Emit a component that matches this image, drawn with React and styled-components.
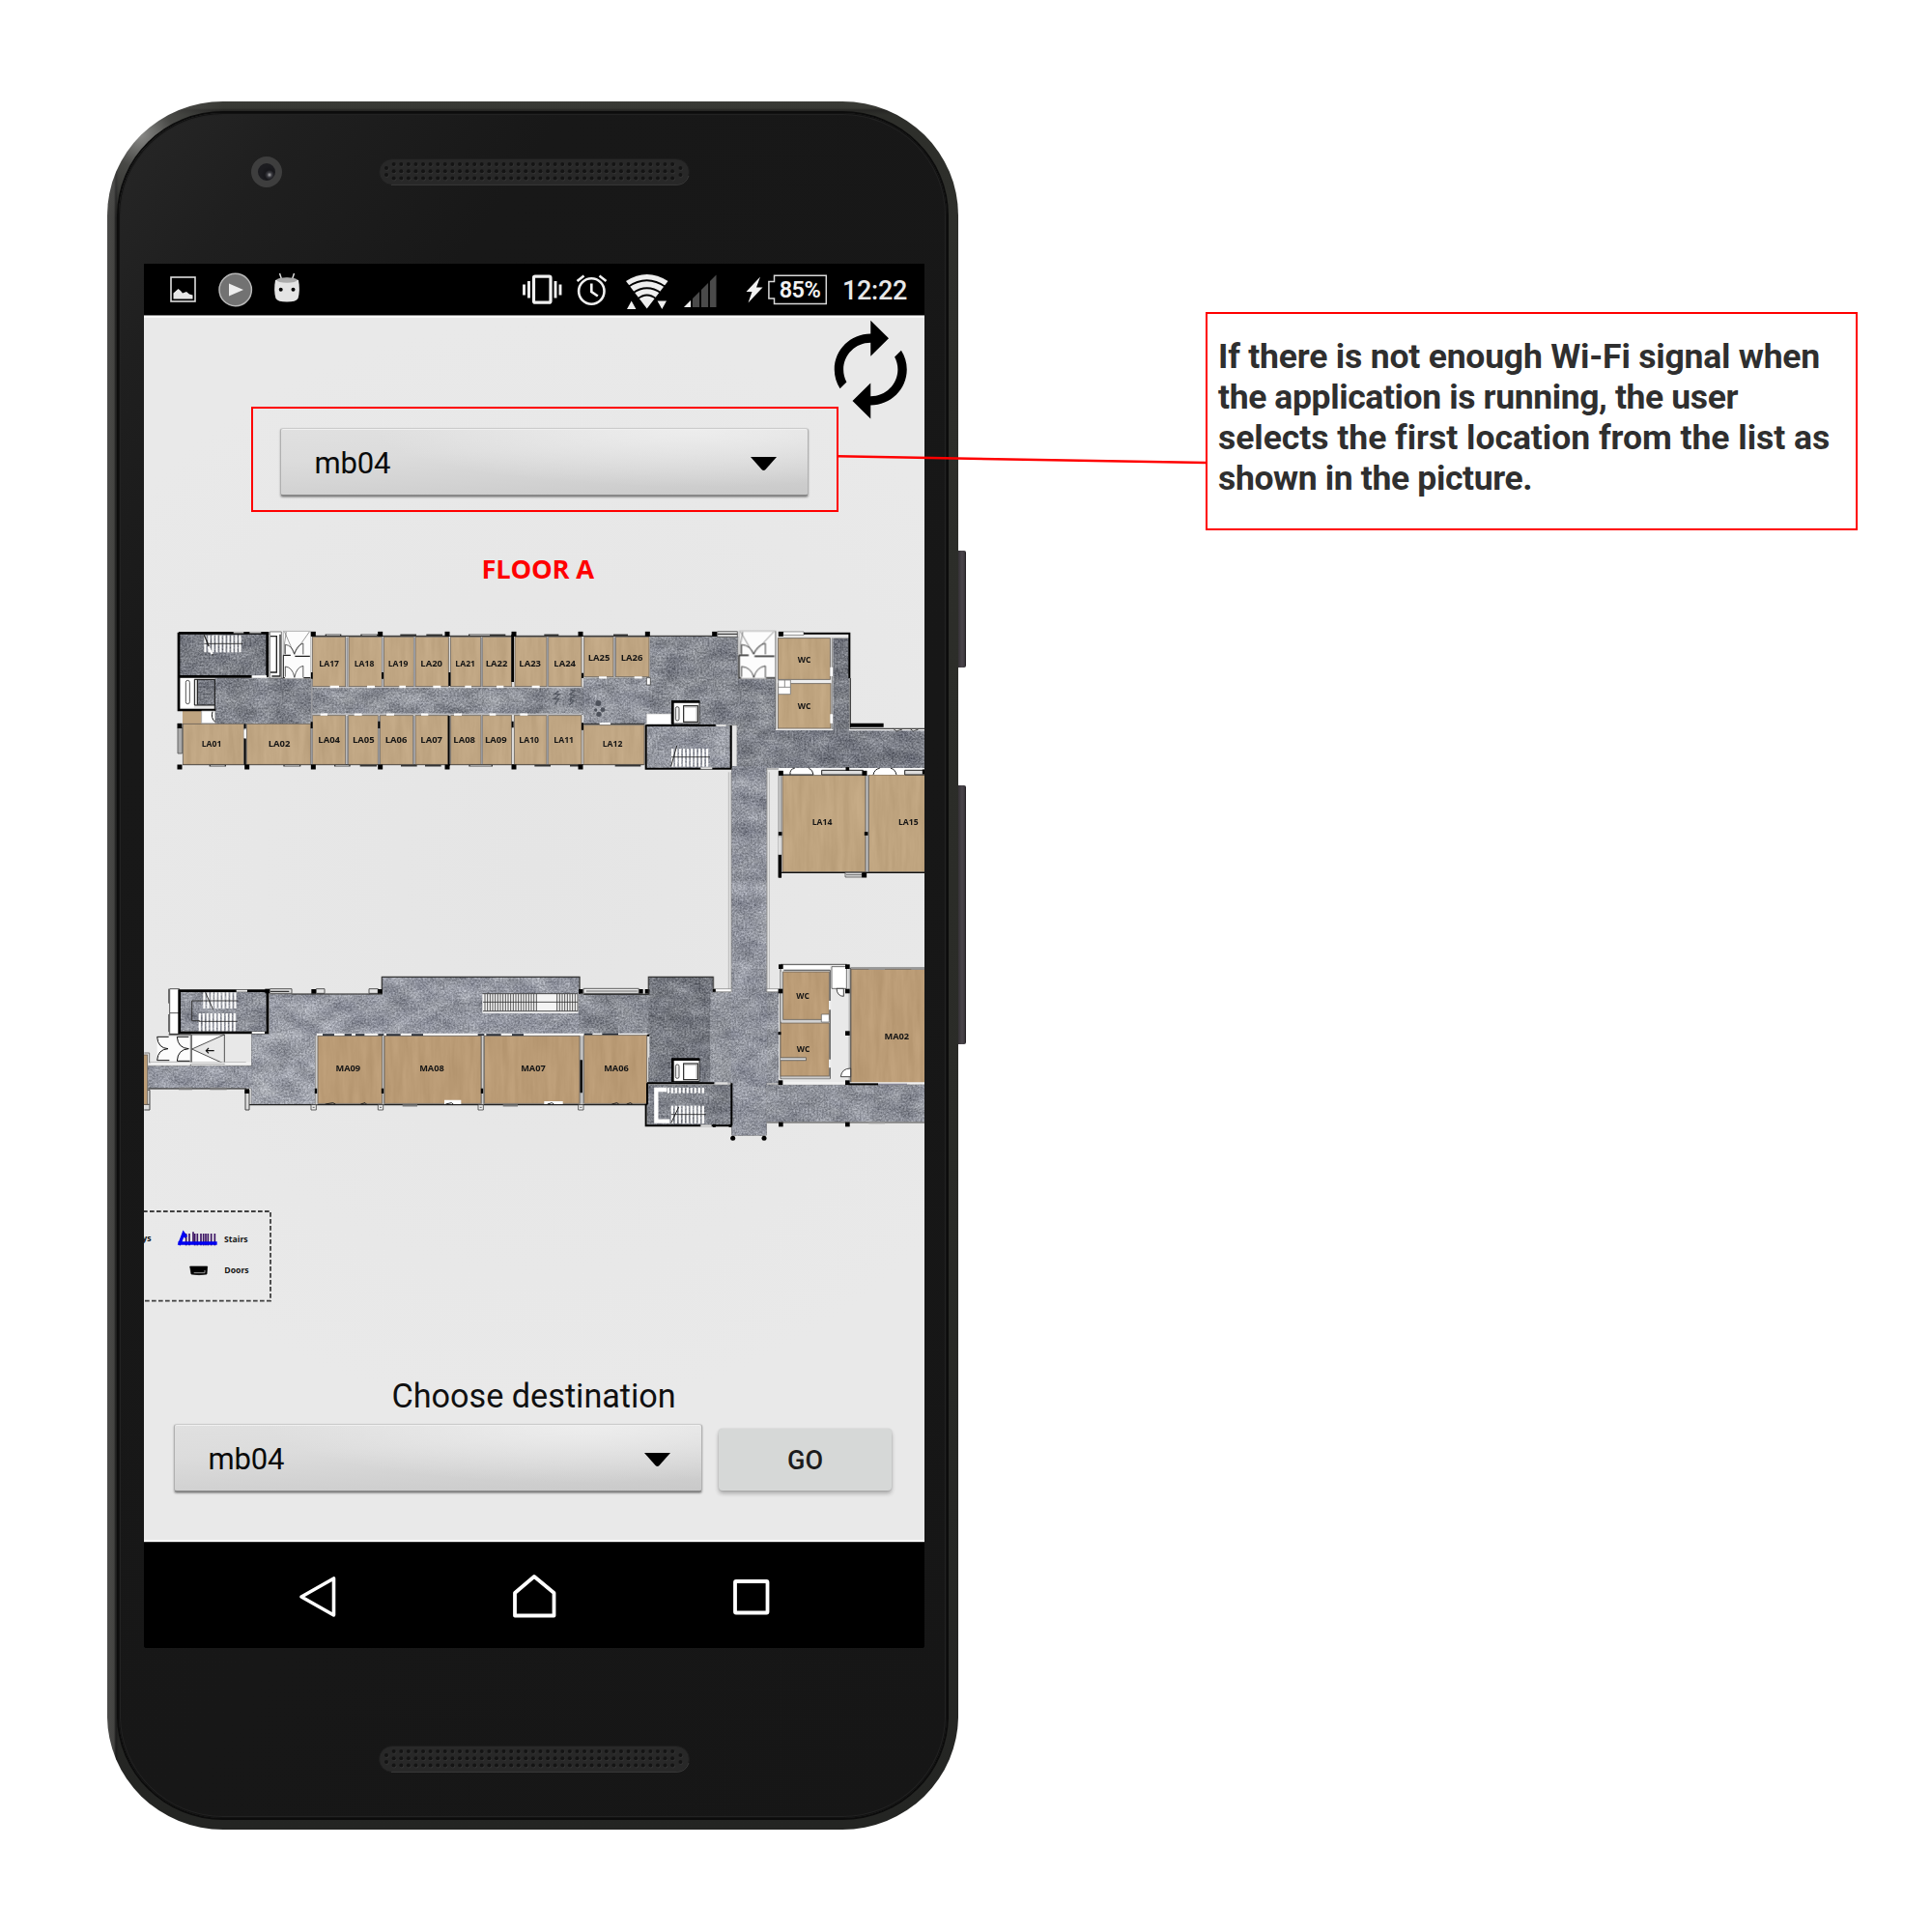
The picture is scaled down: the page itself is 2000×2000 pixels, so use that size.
import React from "react";
import styled, { createGlobalStyle } from "styled-components";

const GlobalStyle = createGlobalStyle`
  * { box-sizing: border-box; }
  html, body { margin: 0; padding: 0; background: #fff; }
`;

const Stage = styled.main`
  position: relative;
  display: flex;
  align-items: flex-start;
  width: 2000px;
  height: 2000px;
  overflow: hidden;
  background: #fff;
  font-family: Roboto, "Liberation Sans", sans-serif;
`;

const Phone = styled.section`
  position: relative;
  flex: none;
  width: 881px;
  height: 1789px;
  margin: 105px 0 0 111px;
  padding: 12px;
  border-radius: 120px / 118px;
  background:
    radial-gradient(circle at 34px 34px, #8a8a88 0, rgba(90, 90, 88, 0.6) 34px, transparent 90px),
    linear-gradient(90deg, #4b4b49 0, #444442 7px, #1c1c1c 9px, transparent 12px),
    linear-gradient(180deg, #3b3c37 0, #373833 7px, #262624 9px, #2e2f2b 14px, #2a2b27 60%, #242523 100%);
`;

const Face = styled.div`
  display: flex;
  flex-direction: column;
  width: 857px;
  height: 1765px;
  border-radius: 108px / 106px;
  background: linear-gradient(125deg, #272727 0, #1f1f1f 9%, #181818 22%, #161616 100%);
  box-shadow: 0 0 0 2px #0c0c0c, inset 0 0 0 1px #121212, inset 0 0 0 2px #222;
`;

const SideKey = styled.i`
  position: absolute;
  left: 881px;
  top: ${(p) => p.$top}px;
  width: 8px;
  height: ${(p) => p.$height}px;
  border-radius: 0 2px 2px 0;
  background: linear-gradient(90deg, #353136, #4a454b 50%, #3d393e 80%, #1c1a1c);
`;

const TopBezel = styled.div`
  display: flex;
  align-items: center;
  gap: 100px;
  height: 122px;
  margin-bottom: 34px;
  padding-left: 137px;
`;

const BottomBezel = styled.div`
  padding: 101px 0 0 269px;
`;

const Camera = styled.div`
  width: 32px;
  height: 32px;
  border: 7px solid #3e3e3e;
  border-radius: 50%;
  background: radial-gradient(circle at 12px 12px, #a9a9ab 0, #3a3a40 2.5px, #17171b 5px, #1c1c20 9px);
`;

const Screen = styled.div`
  display: flex;
  flex-direction: column;
  width: 808px;
  height: 1433px;
  margin-left: 26px;
  border-radius: 0 0 3px 3px;
  overflow: hidden;
  background: #000;
`;

const StatusBar = styled.header`
  display: flex;
  height: 53px;
  background: #000;
  color: #e8e8e8;
`;

const Glyph = styled.svg`
  display: block;
  flex: none;
  margin-left: ${(p) => p.$ml || 0}px;
`;

const Battery = styled.span`
  display: flex;
  align-items: center;
  justify-content: center;
  position: relative;
  width: 61px;
  height: 53px;
  margin-left: 5px;
  padding: 0 0 0 5px;
  color: #f2f2f2;
  font-size: 23.5px;
  font-weight: 600;
  letter-spacing: -0.6px;

  svg {
    position: absolute;
    left: 0;
    top: 0;
  }
`;

const Clock = styled.time`
  margin-left: 16px;
  font-size: 27px;
  font-weight: 500;
  line-height: 56px;
  letter-spacing: -0.3px;
  white-space: nowrap;
`;

const AppView = styled.div`
  display: flex;
  flex-direction: column;
  height: 1270px;
  border-top: 1px solid #888;
  border-bottom: 2px solid #fff;
  background: radial-gradient(circle at 50% 45%, #e5e5e5, #e9e9e9 70%);
  box-shadow: inset 0 2px 0 #f8f8f8;
`;

const ActionRow = styled.div`
  display: flex;
  justify-content: flex-end;
  height: 116px;
  line-height: 0;
`;

const Spinner = styled.button`
  display: flex;
  align-items: center;
  justify-content: space-between;
  flex: none;
  width: 547px;
  height: 71px;
  margin: 0 0 0 ${(p) => p.$ml}px;
  padding: 4px 32px 0 34.5px;
  border: 1px solid #b0b0b0;
  border-top-color: #cbcbcb;
  border-bottom: 2px solid #888;
  border-radius: 3px;
  background:
    radial-gradient(ellipse 330px 60px at 78% 0, rgba(240, 240, 240, 0.85), rgba(236, 236, 236, 0) 100%),
    linear-gradient(177deg, #e0e0e0 0, #dcdcdc 35%, #c9c9c9 100%);
  box-shadow: 0 1px 2px #999, inset 0 1px 0 #f0f0f0;
  color: #0a0a0a;
  font: 400 31px/64px Roboto, sans-serif;
  letter-spacing: -0.2px;
`;

const FloorTitle = styled.h1`
  margin: 55px 0 0;
  height: 45px;
  padding-left: 349.5px;
  color: #f00;
  font: 700 27.3px/40px "Open Sans", "Noto Sans", sans-serif;
  letter-spacing: -0.2px;
  white-space: nowrap;
`;

const MapView = styled.svg`
  display: block;
  flex: none;
  margin-top: 26px;
`;

const RoomName = styled.text`
  font: 700 27px "Open Sans", "Noto Sans", sans-serif;
  fill: #141414;
  text-anchor: middle;
`;

const Prompt = styled.p`
  margin: 64px 0 0;
  height: 50px;
  padding-left: 256.5px;
  color: #101010;
  font: 400 34.2px/42px Roboto, sans-serif;
  white-space: nowrap;
`;

const Controls = styled.div`
  display: flex;
  align-items: flex-start;
  gap: 17px;
`;

const GoButton = styled.button`
  width: 179px;
  height: 64px;
  margin: 5px 0 0;
  padding: 3px 0 0;
  border: 0;
  border-radius: 4px;
  background: #d6d8d7;
  box-shadow: 0 3px 4px rgba(0, 0, 0, 0.28), 0 0 2px rgba(0, 0, 0, 0.14);
  color: #1c1c1c;
  font: 500 27px/61px Roboto, sans-serif;
`;

const NavBar = styled.nav`
  display: flex;
  height: 110px;
  border-top: 1px solid #333;
  background: #000;
`;

const Highlight = styled.div`
  position: absolute;
  left: 260px;
  top: 421px;
  width: 608px;
  height: 109px;
  border: 2px solid #f00;
`;

const Connector = styled.svg`
  position: absolute;
  left: 866px;
  top: 460px;
`;

const Note = styled.aside`
  width: 675px;
  height: 226px;
  margin: 323px 0 0 256px;
  padding: 23px 0 0 11px;
  border: 2px solid #f00;
  background: #fff;
  color: #2f2f2f;
`;

const NoteLine = styled.div`
  height: 42px;
  font: 700 35.5px/42px Roboto, "Open Sans", sans-serif;
  letter-spacing: ${(p) => p.$track}px;
  white-space: nowrap;
`;

function Grille() {
  const dots = [];
  for (let row = 0; row < 3; row++)
    for (let i = 0; i < 39; i++) dots.push([15.7 + i * 7.59, 6 + row * 7.3]);
  dots.push([8, 10], [8, 17], [312.5, 10], [312.5, 17]);
  return (
    <Glyph width="322" height="28">
      <rect x="0.5" y="0.5" width="321" height="27" rx="13.5" fill="#282828" stroke="#1e1e1e" />
      <path d="M13 27.4H309Q318 27 321 18" fill="none" stroke="#3a3a3a" />
      {dots.map(([x, y], i) => (
        <g key={i}>
          <circle cx={x + 0.5} cy={y + 0.6} r="2.2" fill="#353535" />
          <circle cx={x} cy={y} r="2" fill="#141414" />
        </g>
      ))}
    </Glyph>
  );
}

function StatusIcon({ x, w, ml, children }) {
  return (
    <Glyph $ml={ml} width={w} height="53" viewBox={`${x} 273 ${w} 53`}>
      {children}
    </Glyph>
  );
}

function Caret() {
  return (
    <svg width="27" height="15" viewBox="0 0 27 15">
      <path d="M0 0H27L15.500 13Q13.500 15 11.500 13Z" fill="#000" />
    </svg>
  );
}

function Floor({ r, c = "#868a94" }) {
  const [a, b, d, e] = r;
  return <rect x={a} y={b} width={d - a} height={e - b} fill={c} />;
}

function Rooms({ list, color }) {
  return (
    <>
      <g filter="url(#wood)">
        {list.map(([n, a, b, d, e], i) => (
          <rect key={i} x={a} y={b} width={d - a} height={e - b} fill={color} />
        ))}
      </g>
      {list.map(([n, a, b, d, e, lx, ly], i) => (
        <g key={i}>
          <rect x={a} y={b} width={d - a} height={e - b} fill="none" stroke="#6b6257" strokeWidth="2.5" />
          {n && (
            <RoomName x={lx} y={ly + 10} textLength={n === "WC" ? 41 : n[0] === "M" ? 77 : n.includes("1") ? 62 : 68} lengthAdjust="spacingAndGlyphs">
              {n}
            </RoomName>
          )}
        </g>
      ))}
    </>
  );
}

function Pillars({ at, s = 15 }) {
  return at.map(([x, y], i) => <rect key={i} x={x - s / 2} y={y - s / 2} width={s} height={s} fill="#000" />);
}

function Steps({ x, y, n, pitch, h, rail }) {
  return (
    <g>
      {Array.from({ length: n }, (_, i) => (
        <rect key={i} x={x + i * pitch} y={y} width={pitch * 0.55} height={h} fill="#fff" />
      ))}
      {rail && <path d={`M${x} ${rail}h${n * pitch}`} stroke="#222" strokeWidth="2.5" />}
    </g>
  );
}

function Lift({ x, y }) {
  return (
    <g transform={`translate(${x} ${y})`}>
      <rect x="3" y="3" width="84" height="69" fill="#fff" stroke="#000" strokeWidth="2.5" />
      <path d="M4 74V4H88" fill="none" stroke="#000" strokeWidth="8" />
      <rect x="13" y="20" width="11" height="43" rx="5" fill="#eee" stroke="#333" strokeWidth="2.5" />
      <rect x="38" y="17" width="44" height="50" fill="#fff" stroke="#222" strokeWidth="3.5" />
      <path d="M42 21h36v42" fill="none" stroke="#777" strokeWidth="1.5" />
    </g>
  );
}

function Entrance({ x, stretch = 1 }) {
  return (
    <g transform={`translate(${x} 0) scale(${stretch} 1)`} fill="none" stroke="#222" strokeWidth="2.5">
      <rect x="1" y="40" width="112" height="147" fill="#fcfcfc" stroke="#aaa" />
      <path d="M5 42L44 110L108 42M12 42L5 78V110" stroke="#777" />
      <path d="M0 115h30M0 115v70h6M110 118H48M112 185H84" strokeWidth="4" />
      <path d="M8 82q28 2 38 30q8-28 36-34v34M8 112V82M8 182v-32q30 2 38 34q8-32 36-36v36" />
    </g>
  );
}

const northSmall = [
  ["LA17", 460, 58, 563, 212, 512, 140], ["LA18", 573, 58, 677, 212, 621, 140],
  ["LA19", 682, 58, 775, 212, 726, 140], ["LA20", 780, 58, 883, 212, 830, 140],
  ["LA21", 889, 58, 983, 212, 935, 140], ["LA22", 988, 58, 1079, 212, 1032, 140],
  ["LA23", 1089, 58, 1188, 212, 1136, 140], ["LA24", 1193, 58, 1296, 212, 1244, 140],
  ["LA25", 1304, 58, 1395, 182, 1350, 123], ["LA26", 1402, 58, 1506, 182, 1452, 123],
  ["LA04", 460, 302, 563, 454, 512, 377], ["LA05", 572, 302, 664, 454, 619, 377],
  ["LA06", 670, 302, 773, 454, 720, 377], ["LA07", 780, 302, 882, 454, 830, 377],
  ["LA08", 890, 302, 984, 454, 932, 377], ["LA09", 988, 302, 1079, 454, 1030, 377],
  ["LA10", 1087, 302, 1188, 454, 1133, 377], ["LA11", 1193, 302, 1296, 454, 1241, 377],
  ["LA01", 58, 328, 247, 454, 147, 388], ["LA02", 256, 328, 455, 454, 357, 388],
  ["LA12", 1302, 332, 1491, 454, 1392, 390],
];
const northEast = [
  ["WC", 736, 62, 898, 190, 818, 127], ["WC", 736, 203, 900, 342, 818, 272],
  ["LA14", 750, 488, 1008, 788, 873, 631], ["LA15", 1018, 486, 1200, 788, 1141, 631],
];
const southWest = [
  ["MA09", 567, 277, 767, 487, 661, 377], ["MA08", 774, 277, 1074, 487, 921, 377],
  ["MA07", 1084, 277, 1380, 487, 1236, 377], ["MA06", 1394, 275, 1589, 487, 1494, 377],
  ["", 20, 336, 38, 490],
];
const southEast = [
  ["WC", 752, 78, 895, 226, 813, 152], ["WC", 744, 237, 895, 402, 815, 317],
  ["MA02", 963, 70, 1200, 424, 1105, 277],
];

function FloorPlan() {
  return (
    <MapView width="808" height="720" viewBox="27 0 2424 2160">
      <defs>
        <filter id="granite" x="0" y="0" width="1" height="1" colorInterpolationFilters="sRGB">
          <feTurbulence type="fractalNoise" baseFrequency="0.014 0.022" numOctaves="5" seed="7" />
          <feColorMatrix values=".8 .2 0 0 0  .8 .2 0 0 0  .75 .25 0 0 0  0 0 0 0 1" result="n" />
          <feComposite in="SourceGraphic" in2="n" operator="arithmetic" k1="0" k2="1" k3="0.36" k4="-0.17" result="m" />
          <feTurbulence type="fractalNoise" baseFrequency="0.18" numOctaves="2" seed="11" />
          <feColorMatrix values="1 0 0 0 0  1 0 0 0 0  1 0 0 0 0  0 0 0 0 1" result="f" />
          <feComposite in="m" in2="f" operator="arithmetic" k1="0" k2="1" k3="0.42" k4="-0.2" result="g" />
          <feComposite in="g" in2="SourceGraphic" operator="in" />
        </filter>
        <filter id="wood" x="0" y="0" width="1" height="1" colorInterpolationFilters="sRGB">
          <feTurbulence type="fractalNoise" baseFrequency="0.05 0.006" numOctaves="3" seed="3" />
          <feColorMatrix values="1 0 0 0 0  1 0 0 0 0  1 0 0 0 0  0 0 0 0 1" result="n" />
          <feComposite in="SourceGraphic" in2="n" operator="arithmetic" k1="0" k2="1" k3="0.08" k4="-0.035" result="m" />
          <feComposite in="m" in2="SourceGraphic" operator="in" />
        </filter>
      </defs>

      {/* granite floors */}
      <g filter="url(#granite)">
        <g transform="translate(90 0)">
          <Floor r={[45, 48, 325, 182]} c="#74777f" />
          <Floor r={[103, 190, 158, 270]} c="#74777f" />
          <Floor r={[158, 185, 456, 328]} c="#7e8189" />
          <Floor r={[456, 215, 1302, 300]} c="#878a92" />
        </g>
        <g transform="translate(1260 0)">
          <Floor r={[131, 185, 342, 328]} c="#8c8f98" />
          <Floor r={[338, 58, 612, 332]} c="#80838b" />
          <Floor r={[608, 187, 729, 466]} c="#7e8189" />
          <Floor r={[903, 62, 958, 350]} c="#70737b" />
          <Floor r={[727, 345, 1200, 466]} c="#747780" />
          <Floor r={[328, 333, 592, 466]} c="#8f929b" />
        </g>
        <g transform="translate(0 1020)">
          <Floor r={[140, 140, 408, 264]} c="#868992" />
          <Floor r={[416, 147, 770, 272]} c="#91949e" />
          <Floor r={[766, 94, 1380, 274]} c="#8d909a" />
          <Floor r={[360, 270, 564, 490]} c="#9699a2" />
          <Floor r={[38, 370, 362, 440]} c="#91949e" />
          <Floor r={[1376, 147, 1598, 274]} c="#83868e" />
        </g>
        <g transform="translate(1260 1020)">
          <Floor r={[334, 94, 535, 424]} c="#72757d" />
          <Floor r={[525, 140, 738, 424]} c="#8c8f97" />
          <Floor r={[330, 428, 592, 555]} c="#7b7e86" />
          <Floor r={[700, 428, 1200, 544]} c="#898c95" />
          <Floor r={[592, -560, 701, 587]} c="#8b8e98" />
        </g>
      </g>

      {/* north wing */}
      <g transform="translate(90 0)">
        <path d="M460 58H1504M460 212H1296M458 300H1296M57 456H1490" stroke="#f0f0f0" strokeWidth="7" />
        <path d="M458 55H1780M57 455H1490" stroke="#1a1a1a" strokeWidth="3" />
        <path d="M460 213H1300M460 299H1300" stroke="#77777d" strokeWidth="1.5" />
        <Floor r={[57, 286, 116, 330]} c="#bfa480" />
        <Rooms list={northSmall} color="#bfa582" />
        <path d="M568 58V213M677 58V213M777 58V213M986 58V213M1190 58V213M568 302V454M667 302V454M776 302V454M986 302V454M1190 302V454M458 190V454M251 340V454M1399 58V182" stroke="#999a9e" strokeWidth="5" />
        <path d="M515 213h28M630 213h24M730 213h20M835 213h24M934 213h20M1032 213h22M1142 213h24M485 299h22M590 299h24M690 299h24M798 299h22M900 299h24M1010 299h20M1105 299h24M1350 184h24M1460 184h24" stroke="#fff" strokeWidth="7" />
        <path d="M1082 50V198" stroke="#000" strokeWidth="8" />
        <path d="M886 168V210M884 302V458M1082 320v20M667 320v22M678 168v20M458 168v20M458 322v20M1299 325v22M1299 170v16" stroke="#000" strokeWidth="6" />
        <path d="M500 52h50M610 52h54M733 52h50M814 52h50M945 52h74M1010 52h50M1180 52h45M1395 52h45M140 458h52M370 458h54M528 458h50M608 458h52M735 458h50M810 458h50M946 458h74M1150 458h50M1260 458h36M1400 458h80" stroke="#333" strokeWidth="5" />
        <path d="M504 52h42M614 52h46M949 52h62M144 458h44M374 458h46M532 458h42M950 458h66" stroke="#fff" strokeWidth="2" />
        <path d="M45 46H325M45 44V285H160M45 181H272M320 44V182" fill="none" stroke="#000" strokeWidth="8" />
        <path d="M215 44h32M265 44h36" stroke="#bbb" strokeWidth="5" />
        <path d="M272 181h46" stroke="#fff" strokeWidth="7" />
        <Steps x={124} y={53} n={10} pitch={12} h={53} rail={79} />
        <path d="M124 52L150 115" stroke="#222" strokeWidth="4" />
        <path d="M137 88l12 24" stroke="#fff" strokeWidth="7" />
        <rect x="51" y="186" width="42" height="92" fill="#fff" />
        <rect x="67" y="193" width="12" height="73" rx="6" fill="#fff" stroke="#333" strokeWidth="2.5" />
        <path d="M157 190H94V270H157M103 190V268M157 190V285" fill="none" stroke="#111" strokeWidth="3" />
        <path d="M116 288h42v38h-42z" fill="#fff" stroke="#999" strokeWidth="2" />
        <path d="M150 290q-6 20 8 32" fill="none" stroke="#111" strokeWidth="3" />
        <path d="M328 42h36v144h-36z" fill="#fff" stroke="#666" strokeWidth="2.5" />
        <path d="M330 56h19v112h-19M334 180h26V50" fill="none" stroke="#222" strokeWidth="4" />
        <Entrance x={370} stretch={0.75} />
        <path d="M42 340h14v80H42z" fill="#aaa" stroke="#555" strokeWidth="2.5" />
        <path d="M251 328v14M251 374V455" stroke="#000" strokeWidth="6" />
        <path d="M251 346V372" stroke="#fff" strokeWidth="7" />
        <Pillars at={[[463, 49], [671, 49], [879, 49], [1086, 49], [1293, 49], [1501, 49], [1709, 49], [48, 334], [48, 462], [257, 462], [463, 462], [671, 462], [879, 462], [1086, 462], [1293, 462]]} />
        <path d="M1225 226l-14 10h16l-16 14h14l-12 18M1262 222l12 4-14 10 14 4-14 12 12 4-14 14" fill="none" stroke="#555962" strokeWidth="4" />
        <circle cx="1348" cy="264" r="9" fill="#4d515a" /><circle cx="1362" cy="284" r="7" fill="#4d515a" />
        <circle cx="1350" cy="298" r="8" fill="#4d515a" /><circle cx="1340" cy="285" r="5" fill="#4d515a" />
      </g>
      <g transform="translate(1260 0)">
        <path d="M548 41h62v17h-62z" fill="#ddd" stroke="#555" strokeWidth="2.5" />
        <path d="M548 49H610M131 328H322" stroke="#222" strokeWidth="3" />
        <path d="M182 327h34" stroke="#fff" strokeWidth="6" />
        <path d="M328 185h12v22h-12z" fill="#fff" stroke="#222" strokeWidth="2" />
        <path d="M328 297h75v32h-75z" fill="#fff" stroke="#bbb" strokeWidth="2" />
        <Lift x={405} y={255} />
        <path d="M328 333H542M326 331V467H592M590 333V466" fill="none" stroke="#000" strokeWidth="6" />
        <path d="M545 333h30M496 466h36" stroke="#ddd" strokeWidth="6" />
        <Steps x={405} y={405} n={10} pitch={12} h={56} rail={431} />
        <path d="M422 396L404 460" stroke="#222" strokeWidth="3" />
        <Entrance x={615} />
        <path d="M732 40V345H904V62" fill="none" stroke="#ececec" strokeWidth="6" />
        <path d="M729 40V345M736 196H900M904 62V345" fill="none" stroke="#555" strokeWidth="2" />
        <path d="M734 196H902" stroke="#eee" strokeWidth="9" />
        <path d="M752 42h64v10h-64z" fill="#fff" stroke="#666" strokeWidth="2" />
        <Rooms list={northEast} color="#bea37e" />
        <path d="M737 192h38v44h-38zM737 214h38M757 192v22" fill="#fff" stroke="#777" strokeWidth="2.5" />
        <path d="M902 152v28M902 298v28" stroke="#fff" strokeWidth="8" />
        <path d="M816 47H958V186" fill="none" stroke="#000" strokeWidth="6" />
        <path d="M961 186V340M960 343H1200" fill="none" stroke="#444" strokeWidth="4" />
        <path d="M956 347H1200" stroke="#fff" strokeWidth="4" />
        <path d="M960 332h104" stroke="#000" strokeWidth="12" />
        <path d="M1094 343l10 8 18-6M1146 343l10 8 16-6" fill="none" stroke="#333" strokeWidth="2.5" />
        <path d="M738 466H1200v20H738z" fill="#fff" />
        <path d="M738 486H846M774 486q-2-18 14-20M846 486q-2-16-14-20M1032 486q4-18 20-20M1104 486q-4-18-18-20" fill="none" stroke="#222" strokeWidth="3" />
        <path d="M872 472h128v14H872zM1130 472h70v14h-70z" fill="#ddd" stroke="#222" strokeWidth="3" />
        <path d="M738 488h8V804h-8zM1009 488h6v300h-6z" fill="#d2d2d2" stroke="#666" strokeWidth="2" />
        <path d="M742 734V806" stroke="#000" strokeWidth="10" />
        <path d="M742 680V734" stroke="#ddd" strokeWidth="9" />
        <path d="M746 790H1200" stroke="#111" strokeWidth="4" />
        <path d="M945 790h52v14h-52zM948 797h48" fill="#ddd" stroke="#555" strokeWidth="2.5" />
        <Pillars at={[[745, 49], [745, 481], [1005, 481], [1004, 798], [1192, 477]]} />
        <Pillars s={11} at={[[743, 669], [1010, 669], [952, 468]]} />
        <path d="M583 478V1153M589 478V1153M703 472V1153M709 478V1153" stroke="#b0b0b0" strokeWidth="2.5" />
        <path d="M700 468h38" stroke="#888" strokeWidth="3" />
      </g>

      {/* south wing */}
      <g transform="translate(0 1020)">
        <path d="M107 131h30v140h-30zM108 206h28M104 131v45M104 210v55" fill="#fff" stroke="#555" strokeWidth="3" />
        <path d="M137 137H411V267H137Z" fill="none" stroke="#000" strokeWidth="8" />
        <path d="M314 137h34M362 267h40" stroke="#eee" strokeWidth="6" />
        <Steps x={211} y={142} n={9} pitch={12} h={50} rail={168} />
        <Steps x={197} y={207} n={10} pitch={12} h={55} rail={232} />
        <path d="M218 142l24 54M176 168v62h24M176 168h34" fill="none" stroke="#333" strokeWidth="3" />
        <path d="M418 131h68v14h-68zM562 131h26v14h-26zM726 131h28v14h-28z" fill="#e5e5e5" stroke="#555" strokeWidth="3" />
        <path d="M420 139h58M486 147H766V94H1380V147" fill="none" stroke="#333" strokeWidth="3.5" />
        <path d="M278 273h82v95h-82z" fill="#e8e8e8" />
        <path d="M175 273H277V364H175zM277 273L176 318L277 364" fill="#fff" stroke="#333" strokeWidth="2.5" />
        <path d="M220 323h25M228 315l-8 8 8 8" fill="none" stroke="#111" strokeWidth="3.5" />
        <path d="M68 280h105v75H68z" fill="#fcfcfc" />
        <path d="M68 280h36M68 280q2 35 34 37q-32 2-34 36h38M130 280h36M130 280q2 35 36 37q-34 2-36 38h40M104 273h70" fill="none" stroke="#111" strokeWidth="3" />
        <path d="M28 330h16v30h300M172 273v96" fill="none" stroke="#777" strokeWidth="3" />
        <path d="M46 362H360" stroke="#f3f3f3" strokeWidth="5" />
        <path d="M40 441H345M354 491H1590" stroke="#222" strokeWidth="3.5" />
        <path d="M135 441h42M232 441h52M830 493h46M1142 493h46" stroke="#777" strokeWidth="7" />
        <path d="M342 445h12v62h-12zM38 445h7v62H28M28 490h16" fill="#ddd" stroke="#444" strokeWidth="3" />
        <path d="M564 273H1594" stroke="#f4f4f4" strokeWidth="7" />
        <path d="M582 274h36M650 274h22M684 274h28M780 274h44M858 274h36M1064 274h20M1090 274h46M1170 274h36M754 274h18M1394 272h26M1450 272h50" stroke="#222833" strokeWidth="6" />
        <path d="M562 277V490M770 277V490M1079 277V490M1386 277V490M1593 277V344" stroke="#dcdcdc" strokeWidth="8" />
        <path d="M560 277V490M772 277V490M1076 277V490M1082 277V490M1383 277V490M1390 277V490" stroke="#666" strokeWidth="2" />
        <Rooms list={southWest} color="#b99a74" />
        <path d="M960 476h52v13h-52zM1270 480h58v9h-58z" fill="#fff" />
        <path d="M590 489l24-4 8 4M700 489l14-4 4 4M964 489l18-4 6 4M1280 489l14-4 6 4M1480 489l16-4 6 4M1526 489l12-4 6 4" fill="none" stroke="#222" strokeWidth="3" />
        {[554, 762, 1073, 1384].map((x) => (
          <path key={x} d={`M${x - 8} 491h16v16h-16zM${x - 3} 499h6`} fill="#eee" stroke="#444" strokeWidth="2.5" />
        ))}
        <path d="M1078 146h298v57h-298z" fill="#f4f4f4" />
        <path d="M1078 146h296M1080 172h294M1080 200h294" stroke="#333" strokeWidth="2.5" />
        <path d="M1078 205h298" stroke="#eee" strokeWidth="4" />
        {Array.from({ length: 21 }, (_, i) => <path key={i} d={`M${1086 + i * 8} 147v53`} stroke="#333" strokeWidth="2.5" />)}
        {Array.from({ length: 9 }, (_, i) => <path key={i} d={`M${1310 + i * 8} 147v53`} stroke="#333" strokeWidth="2.5" />)}
        <path d="M561 440v16M768 440v16M1077 440v16M1385 352v102M1593 272v6" stroke="#000" strokeWidth="7" />
        <Pillars s={14} at={[[554, 139], [760, 139], [347, 449], [410, 138], [1384, 139], [1570, 139], [1590, 139]]} />
      </g>
      <g transform="translate(1260 1020)">
        <path d="M132 130h172v15H132zM140 138h160" fill="#eee" stroke="#444" strokeWidth="2.5" />
        <path d="M132 148H334V94H535V136" fill="none" stroke="#333" strokeWidth="3.5" />
        <path d="M535 131h57v9h-57zM701 131h38v9h-38z" fill="#fff" stroke="#777" strokeWidth="2" />
        <Lift x={405} y={346} />
        <path d="M326 488V556H592M330 424H538M330 424V490M592 424V556" fill="none" stroke="#000" strokeWidth="6" />
        <path d="M542 424h38M496 556h34" stroke="#ddd" strokeWidth="7" />
        <path d="M390 444H358V542H400" fill="none" stroke="#fff" strokeWidth="13" />
        <Steps x={392} y={438} n={10} pitch={12} h={17} />
        <Steps x={404} y={494} n={9} pitch={12} h={55} rail={521} />
        <path d="M428 498L404 548" stroke="#222" strokeWidth="3" />
        <path d="M740 60h212v368H740z" fill="#e9e9e9" />
        <path d="M744 55H950M754 73H898V410H744V140M744 60V236" fill="none" stroke="#555" strokeWidth="3" />
        <path d="M752 64H898" stroke="#fff" strokeWidth="10" />
        <path d="M903 62h46v68h-46z" fill="#fff" stroke="#555" strokeWidth="2.5" />
        <path d="M748 78V230H870M746 406H897" fill="none" stroke="#ccc" strokeWidth="7" />
        <path d="M958 66V428" stroke="#ccc" strokeWidth="7" />
        <path d="M961 66H1200M961 66V428" fill="none" stroke="#555" strokeWidth="3" />
        <Rooms list={southEast} color="#ba9b75" />
        <path d="M744 349h80" stroke="#555" strokeWidth="11" /><path d="M744 349h78" stroke="#ddd" strokeWidth="6" />
        <path d="M871 210h24v24h-24z" fill="#fff" stroke="#555" strokeWidth="2" />
        <path d="M898 168v28M898 350v26" stroke="#eee" strokeWidth="8" />
        <path d="M918 130q2 24 22 24v-24zM962 378q-28 0-31 26h31z" fill="#fff" stroke="#222" strokeWidth="2.5" />
        <path d="M750 424H1200" stroke="#f2f2f2" strokeWidth="6" />
        <path d="M955 427h92" stroke="#000" strokeWidth="6" /><path d="M1047 427h90" stroke="#889" strokeWidth="4" />
        <path d="M702 546H1200" stroke="#777" strokeWidth="4" />
        <path d="M1018 68h50M1150 68h50M1018 547h50" stroke="#999" strokeWidth="6" />
        <Pillars s={14} at={[[745, 62], [952, 62], [952, 138], [744, 138], [952, 269], [744, 422], [952, 422], [745, 552], [952, 552]]} />
        <Pillars s={9} at={[[741, 269], [538, 136], [538, 556], [588, 556]]} />
        <circle cx="596" cy="595" r="7.5" /><circle cx="693" cy="595" r="7.5" />
      </g>

      {/* legend */}
      <g transform="translate(0 1770)">
        <path d="M24 72H420V350H24" fill="none" stroke="#404040" strokeWidth="5.5" strokeDasharray="14 7" />
        <RoomName style={{ textAnchor: "start" }} x="22" y="166" textLength="28" lengthAdjust="spacingAndGlyphs">ys</RoomName>
        <RoomName style={{ textAnchor: "start" }} x="276" y="167" textLength="74" lengthAdjust="spacingAndGlyphs">Stairs</RoomName>
        <RoomName style={{ textAnchor: "start" }} x="277" y="264" textLength="76" lengthAdjust="spacingAndGlyphs">Doors</RoomName>
        {[158, 168, 180, 185, 193, 204, 212, 219, 226, 236, 247].map((x) => (
          <path key={x} d={`M${x} ${x === 180 ? 136 : 141}v37`} stroke="#3c1464" strokeWidth="5" />
        ))}
        <path d="M136 177L150 141L158 152M133 171H254" fill="none" stroke="#0000f0" strokeWidth="10" />
        <path d="M170 243h54l-2 24q-24 4-48 0z" fill="#000" stroke="#000" strokeLinejoin="round" strokeWidth="2" />
        <path d="M182 263h34v-8" fill="none" stroke="#999" strokeWidth="3" />
      </g>
    </MapView>
  );
}

export default function App() {
  return (
    <Stage>
      <GlobalStyle />
      <Phone>
        <SideKey $top={465} $height={121} />
        <SideKey $top={708} $height={268} />
        <Face>
          <TopBezel>
            <Camera />
            <Grille />
          </TopBezel>
          <Screen>
            <StatusBar>
              <StatusIcon x={176} w={27} ml={27}>
                <rect x="177" y="287" width="25" height="25" fill="none" stroke="#dedede" strokeWidth="1.6" />
                <path d="M179.500 309.500v-6l5-4.500 2.500 2 2 2.500 4-1.500 3 2.500 3.500 1v4z" fill="#e8e8e8" />
              </StatusIcon>
              <StatusIcon x={226} w={36} ml={23}>
                <circle cx="243.700" cy="300" r="16.700" fill="#727272" stroke="#b8b8b8" strokeWidth="1.500" />
                <path d="M237 293.500L252 300L237 306.500Z" fill="#eee" />
              </StatusIcon>
              <StatusIcon x={283} w={28} ml={21}>
                <path d="M289.500 283l2 6M304.500 283l-2 6" stroke="#d8d8d8" strokeWidth="1.500" />
                <path d="M285 290q12-4.500 24 0q2 11-.5 19q-2 3.500-11.500 3.500t-11.500-3.500q-2.500-8-.5-19z" fill="#e4e4e4" />
                <ellipse cx="297" cy="290" rx="10.500" ry="2.700" fill="#aaa" />
                <circle cx="290.700" cy="299.700" r="2" fill="#000" /><circle cx="303.500" cy="299.700" r="2" fill="#000" />
              </StatusIcon>
              <StatusIcon x={540} w={43} ml={229}>
                <rect x="552.500" y="286.200" width="17.500" height="27" rx="1.500" fill="none" stroke="#f0f0f0" strokeWidth="3.200" />
                <path d="M542.500 294.500v11M547.500 291v17.500M575 291v17.500M580 294.500v11" stroke="#f0f0f0" strokeWidth="2.900" />
              </StatusIcon>
              <StatusIcon x={596} w={33} ml={13}>
                <g fill="none" stroke="#f0f0f0" strokeWidth="2.600">
                  <circle cx="612.300" cy="301.500" r="13.200" />
                  <path d="M612.300 293.500v8.500l6.500 4.500M597.500 291l7-5.500M627.500 291l-7-5.500" />
                </g>
              </StatusIcon>
              <StatusIcon x={647} w={46} ml={18}>
                <path d="M648 291Q669.700 277 691.500 291L669.700 319.500Z" fill="#eee" />
                <path d="M650 297Q669.700 283.500 689 297M655 303.500Q669.700 293 684.500 303.500M660 309.500Q669.700 301.500 679.500 309.500" fill="none" stroke="#000" strokeWidth="1.900" />
                <path d="M649 320l4.700-8.500 4.700 8.500zM680.500 311.500h9.500l-4.700 8.500z" fill="#eee" />
              </StatusIcon>
              <StatusIcon x={707} w={36} ml={14}>
                <path d="M708 318L741.500 284.500V318Z" fill="#4a4a4a" />
                <path d="M708 318L715 311V318Z" fill="#eee" />
                <path d="M716 284v35M725 284v35M734 284v35" stroke="#000" strokeWidth="1.800" />
              </StatusIcon>
              <StatusIcon x={772} w={18} ml={29}>
                <path d="M787 286.500L772.500 302H778.500L774.500 313.500L789.500 297.500H783Z" fill="#f2f2f2" />
              </StatusIcon>
              <Battery>
                <svg width="62" height="53" viewBox="795 273 62 53">
                  <path d="M801.500 285.200H855.300V314.500H801.500V309H795.900V291.500H801.500Z" fill="none" stroke="#d8d8d8" strokeWidth="1.500" />
                </svg>
                85%
              </Battery>
              <Clock>12:22</Clock>
            </StatusBar>

            <AppView>
              <ActionRow>
                <svg width="112.500" height="111" viewBox="0 0 24 24" preserveAspectRatio="none">
                  <path d="M12 6v3l4-4-4-4v3c-4.420 0-8 3.580-8 8 0 1.570.46 3.030 1.240 4.260L6.700 14.800c-.45-.83-.7-1.790-.7-2.800 0-3.310 2.690-6 6-6zm6.760 1.740L17.300 9.200c.44.84.7 1.790.7 2.800 0 3.310-2.690 6-6 6v-3l-4 4 4 4v-3c4.420 0 8-3.580 8-8 0-1.570-.46-3.030-1.240-4.260z" />
                </svg>
              </ActionRow>
              <Spinner $ml={141}>mb04 <Caret /></Spinner>
              <FloorTitle>FLOOR A</FloorTitle>
              <FloorPlan />
              <Prompt>Choose destination</Prompt>
              <Controls>
                <Spinner $ml={31}>mb04 <Caret /></Spinner>
                <GoButton>GO</GoButton>
              </Controls>
            </AppView>

            <NavBar>
              <Glyph $ml={156} width="48" height="109" viewBox="305 1597 48 109">
                <path d="M345.500 1634V1672L312 1653Z" fill="none" stroke="#fff" strokeWidth="3.600" strokeLinejoin="round" />
              </Glyph>
              <Glyph $ml={175} width="50" height="109" viewBox="528 1597 50 109">
                <path d="M533 1672.500V1649L553 1632L573.500 1649V1672.500Z" fill="none" stroke="#fff" strokeWidth="3.800" strokeLinejoin="round" />
              </Glyph>
              <Glyph $ml={177} width="45" height="109" viewBox="755 1597 45 109">
                <rect x="761" y="1637" width="33.500" height="32.500" rx="1" fill="none" stroke="#fff" strokeWidth="3.800" />
              </Glyph>
            </NavBar>
          </Screen>
          <BottomBezel>
            <Grille />
          </BottomBezel>
        </Face>
      </Phone>

      <Note>
        <NoteLine $track={-0.2}>If there is not enough Wi-Fi signal when</NoteLine>
        <NoteLine $track={-0.38}>the application is running, the user</NoteLine>
        <NoteLine $track={-0.03}>selects the first location from the list as</NoteLine>
        <NoteLine $track={-0.36}>shown in the picture.</NoteLine>
      </Note>

      <Highlight />
      <Connector width="384" height="32">
        <path d="M1 12.300L383 19" stroke="#f00" strokeWidth="2.500" />
      </Connector>
    </Stage>
  );
}
